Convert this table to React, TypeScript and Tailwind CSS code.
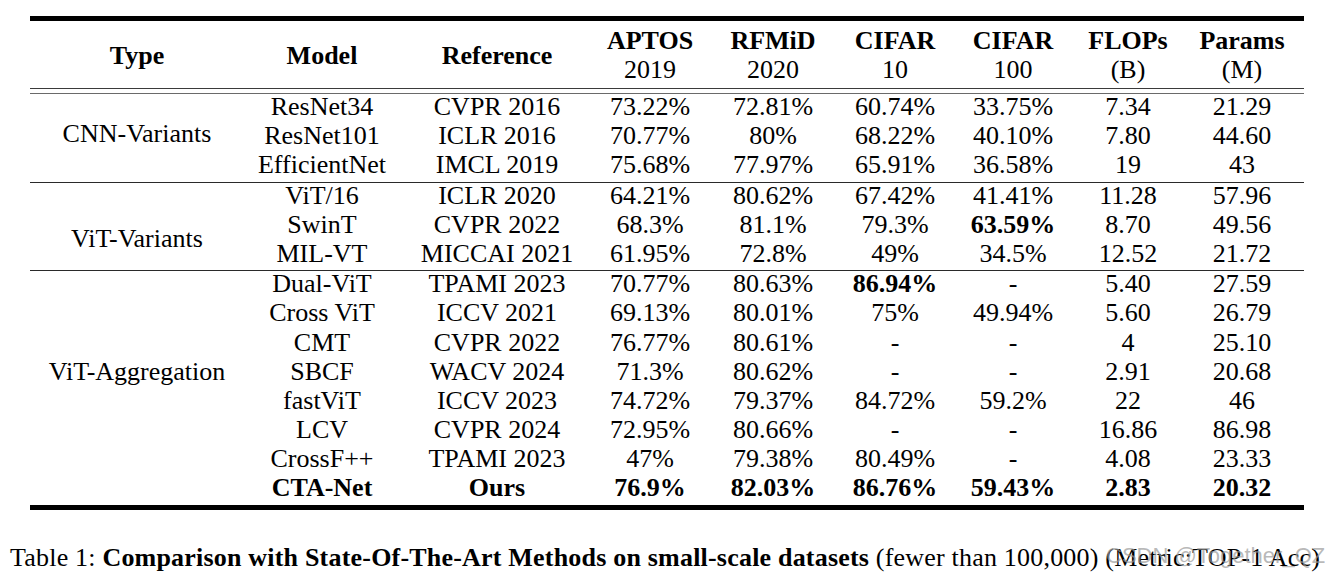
import React from "react";

type Row = {
  model: string;
  reference: string;
  values: string[];
  bold?: number[];
};

type Group = {
  type: string;
  labelPad: string;
  rows: Row[];
};

const groups: Group[] = [
  {
    type: "CNN-Variants",
    labelPad: "pt-[28px]",
    rows: [
      { model: "ResNet34", reference: "CVPR 2016", values: ["73.22%", "72.81%", "60.74%", "33.75%", "7.34", "21.29"] },
      { model: "ResNet101", reference: "ICLR 2016", values: ["70.77%", "80%", "68.22%", "40.10%", "7.80", "44.60"] },
      { model: "EfficientNet", reference: "IMCL 2019", values: ["75.68%", "77.97%", "65.91%", "36.58%", "19", "43"] },
    ],
  },
  {
    type: "ViT-Variants",
    labelPad: "pt-[44px]",
    rows: [
      { model: "ViT/16", reference: "ICLR 2020", values: ["64.21%", "80.62%", "67.42%", "41.41%", "11.28", "57.96"] },
      { model: "SwinT", reference: "CVPR 2022", values: ["68.3%", "81.1%", "79.3%", "63.59%", "8.70", "49.56"], bold: [3] },
      { model: "MIL-VT", reference: "MICCAI 2021", values: ["61.95%", "72.8%", "49%", "34.5%", "12.52", "21.72"] },
    ],
  },
  {
    type: "ViT-Aggregation",
    labelPad: "pt-[89px]",
    rows: [
      { model: "Dual-ViT", reference: "TPAMI 2023", values: ["70.77%", "80.63%", "86.94%", "-", "5.40", "27.59"], bold: [2] },
      { model: "Cross ViT", reference: "ICCV 2021", values: ["69.13%", "80.01%", "75%", "49.94%", "5.60", "26.79"] },
      { model: "CMT", reference: "CVPR 2022", values: ["76.77%", "80.61%", "-", "-", "4", "25.10"] },
      { model: "SBCF", reference: "WACV 2024", values: ["71.3%", "80.62%", "-", "-", "2.91", "20.68"] },
      { model: "fastViT", reference: "ICCV 2023", values: ["74.72%", "79.37%", "84.72%", "59.2%", "22", "46"] },
      { model: "LCV", reference: "CVPR 2024", values: ["72.95%", "80.66%", "-", "-", "16.86", "86.98"] },
      { model: "CrossF++", reference: "TPAMI 2023", values: ["47%", "79.38%", "80.49%", "-", "4.08", "23.33"] },
    ],
  },
];

const ours: Row = {
  model: "CTA-Net",
  reference: "Ours",
  values: ["76.9%", "82.03%", "86.76%", "59.43%", "2.83", "20.32"],
};

const headers: [string, string][] = [
  ["APTOS", "2019"],
  ["RFMiD", "2020"],
  ["CIFAR", "10"],
  ["CIFAR", "100"],
  ["FLOPs", "(B)"],
  ["Params", "(M)"],
];

// widths of the 8 columns right of "Type"
const rowGrid = "grid grid-cols-[156px_194px_112px_134px_110px_126px_104px_124px] text-center";

function DataRow({ row, allBold }: { row: Row; allBold?: boolean }) {
  return (
    <div className={`${rowGrid} h-[29.2px] leading-[25px] ${allBold ? "font-bold" : ""}`}>
      <div>{row.model}</div>
      <div>{row.reference}</div>
      {row.values.map((v, i) => (
        <div key={i} className={row.bold?.includes(i) ? "font-bold" : ""}>
          {v}
        </div>
      ))}
    </div>
  );
}

export default function App() {
  return (
    <div className="relative w-[1339px] h-[576px] bg-white text-black font-['Liberation_Serif',serif] text-[26px] overflow-hidden">
      <div className="pt-4 pl-[30px]">
        <div className="w-[1274px]">
          <div className="h-[5px] bg-black" />

          {/* header */}
          <div className="flex pt-[5px] pb-1 font-bold leading-[29px]">
            <div className="w-[214px] flex items-center justify-center">Type</div>
            <div className={rowGrid}>
              <div className="flex items-center justify-center">Model</div>
              <div className="flex items-center justify-center">Reference</div>
              {headers.map(([a, b]) => (
                <div key={a + b} className="flex flex-col">
                  <span>{a}</span>
                  <span className="font-normal">{b}</span>
                </div>
              ))}
            </div>
          </div>

          <div className="h-px bg-[#3a3a3a]" />
          <div className="h-[4px]" />
          <div className="h-px bg-[#6a6a6a]" />

          {groups.map((g, gi) => (
            <div key={g.type}>
              {gi > 0 && <div className="h-px bg-[#2a2a2a]" />}
              <div className="flex">
                <div className={`w-[214px] text-center leading-[24px] ${g.labelPad}`}>{g.type}</div>
                <div>
                  {g.rows.map((r) => (
                    <DataRow key={r.model} row={r} />
                  ))}
                  {gi === groups.length - 1 && <DataRow row={ours} allBold />}
                </div>
              </div>
            </div>
          ))}

          <div className="h-[5px] bg-black" />
        </div>
      </div>

      <p className="mt-[33px] pl-[10px] text-[26px] tracking-[0.2px] leading-[30px] whitespace-nowrap">
        Table 1: <span className="font-bold">Comparison with State-Of-The-Art Methods on small-scale datasets</span>{" "}
        (fewer than 100,000) (Metric:TOP-1 Acc)
      </p>

      <div className="absolute left-[1106px] top-[541px] font-['Liberation_Sans',sans-serif] text-[22px] leading-[30px] text-[#9a9a9a]/70 whitespace-nowrap">
        CSDN @Together_QZ
      </div>
    </div>
  );
}
